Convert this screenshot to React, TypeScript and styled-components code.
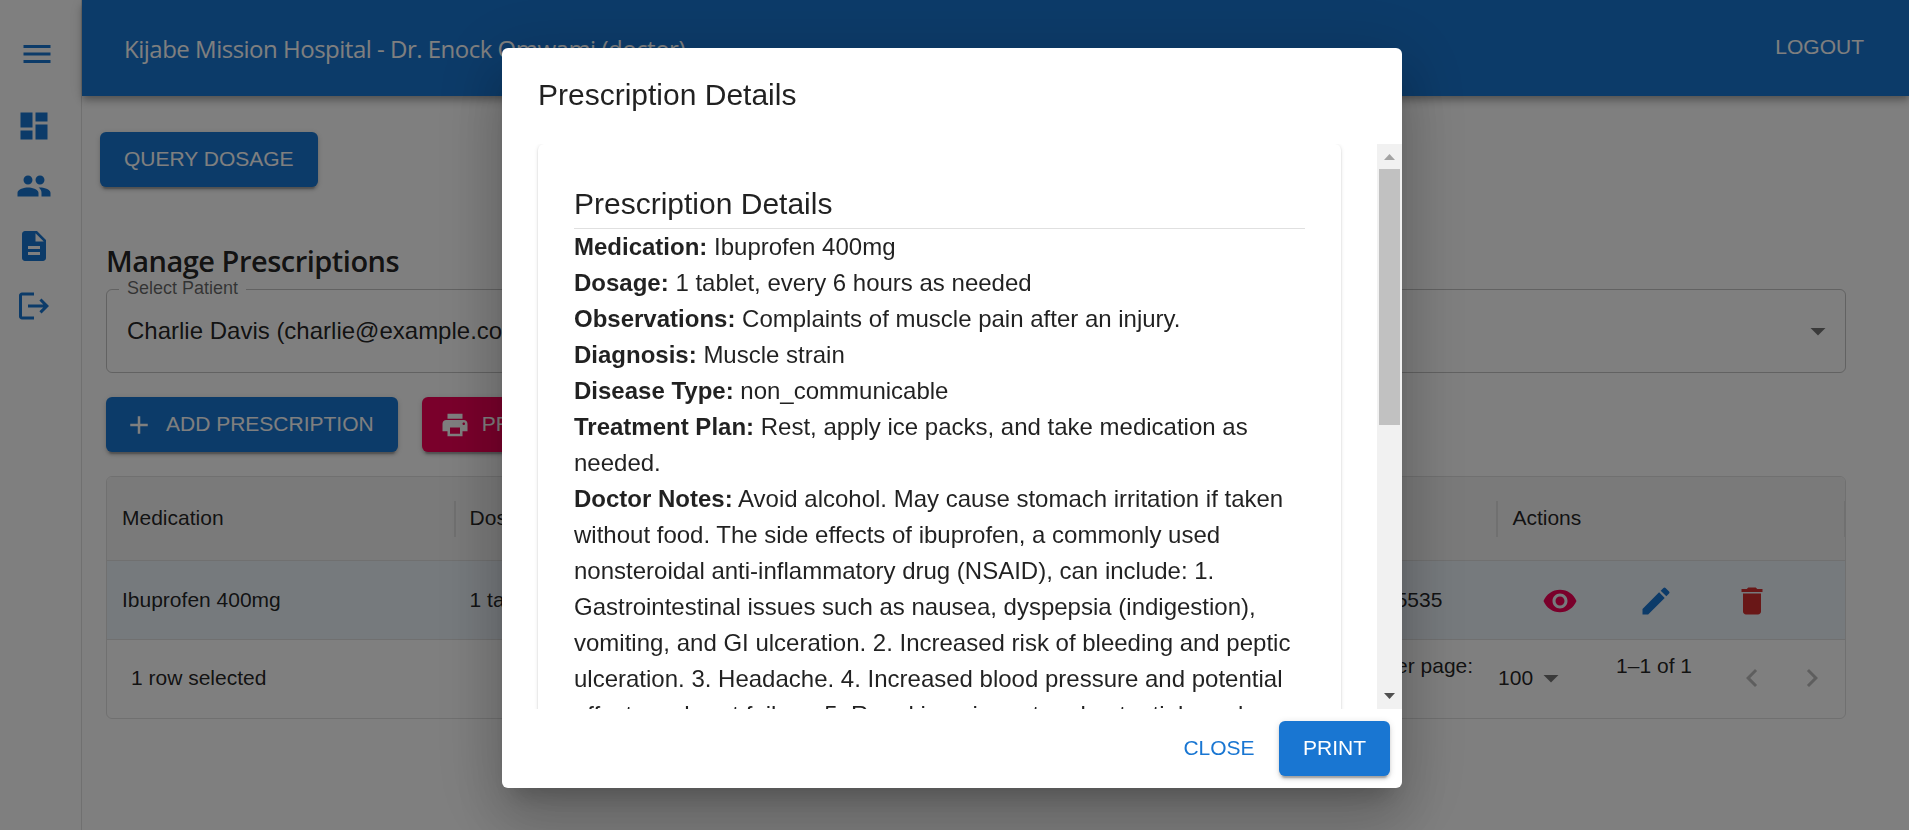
import React from 'react';
import styled, { createGlobalStyle } from 'styled-components';
import {
  MdAdd, MdArrowDropDown, MdDashboard, MdDelete, MdDescription, MdEdit,
  MdKeyboardArrowLeft, MdKeyboardArrowRight, MdLogout, MdMenu, MdPeople, MdPrint, MdVisibility,
} from 'react-icons/md';

const primary = '#1976d2';
const secondary = '#f50057';
const error = '#d32f2f';
const ink = 'rgba(0, 0, 0, 0.87)';
const sans = "'Liberation Sans', Arial, sans-serif";
const humanist = "'Open Sans', 'Noto Sans', sans-serif";

const GlobalStyle = createGlobalStyle`
  *, *::before, *::after { box-sizing: border-box; }
  body { margin: 0; background: #fff; color: ${ink}; font-family: ${sans}; overflow: hidden; }
  svg { display: block; flex-shrink: 0; }
`;

const Page = styled.div`
  display: flex;
  width: 100%;
  height: 830px;
`;

const Drawer = styled.nav`
  width: 82px;
  flex-shrink: 0;
  border-right: 1px solid #e0e0e0;
  color: ${primary};
`;

const MenuButton = styled.div`
  height: 96px;
  padding: 36px 0 0 19px;
`;

const NavItem = styled.div`
  height: 60px;
  padding: 12px 0 0 16px;
`;

const Main = styled.div`
  flex: 1;
  min-width: 0;
  display: flex;
  flex-direction: column;
`;

const AppBar = styled.header`
  height: 96px;
  flex-shrink: 0;
  display: flex;
  align-items: flex-start;
  justify-content: space-between;
  padding: 0 45px 0 42px;
  background: ${primary};
  color: #fff;
  box-shadow: 0 3px 6px -1.5px rgba(0, 0, 0, 0.2), 0 6px 7.5px 0 rgba(0, 0, 0, 0.14), 0 1.5px 15px 0 rgba(0, 0, 0, 0.12);
`;

const AppTitle = styled.h1`
  margin: 31px 0 0;
  font: 400 24px/36px ${humanist};
  letter-spacing: -0.5px;
  white-space: nowrap;
`;

const Logout = styled.span`
  margin-top: 28px;
  font-size: 21px;
  line-height: 37px;
`;

const Content = styled.main`
  padding: 36px 63px 0 24px;
`;

const Button = styled.button<{ $tone?: string; $text?: boolean }>`
  display: inline-flex;
  align-items: center;
  justify-content: center;
  height: 55px;
  min-width: 96px;
  padding: 0 ${(p) => (p.$text ? 12 : 24)}px;
  border: 0;
  border-radius: 6px;
  font: 400 21px/37px ${sans};
  white-space: nowrap;
  color: ${(p) => (p.$text ? primary : '#fff')};
  background: ${(p) => (p.$text ? 'transparent' : p.$tone ?? primary)};
  box-shadow: ${(p) =>
    p.$text
      ? 'none'
      : '0 4.5px 1.5px -3px rgba(0,0,0,.2), 0 3px 3px 0 rgba(0,0,0,.14), 0 1.5px 7.5px 0 rgba(0,0,0,.12)'};
  svg { margin: 0 12px 0 -6px; }
`;

const ButtonLabel = styled.span`
  padding-bottom: 2px;
`;

const QueryRow = styled.div`
  margin-left: -6px;
  height: 108px;
`;

const Heading = styled.h2`
  margin: 0;
  height: 49px;
  font: 600 29px/41px ${humanist};
  letter-spacing: -0.5px;
`;

const Select = styled.fieldset`
  margin: -7px 0 0;
  height: 91px;
  padding: 0 9px 6px 12px;
  border: 1px solid rgba(0, 0, 0, 0.23);
  border-radius: 6px;
  display: block;
  min-width: 0;
`;

const SelectLabel = styled.legend`
  padding: 0 8px 0 8px;
  height: 14px;
  font-size: 18px;
  line-height: 12px;
  color: rgba(0, 0, 0, 0.6);
`;

const SelectValue = styled.div`
  display: flex;
  align-items: center;
  justify-content: space-between;
  height: 70px;
  padding-left: 8px;
  font-size: 24px;
  svg { color: rgba(0, 0, 0, 0.54); }
`;

const ButtonRow = styled.div`
  display: flex;
  gap: 24px;
  margin-top: 24px;
`;

const Grid = styled.section`
  margin-top: 24px;
  border: 1px solid #e0e0e0;
  border-radius: 6px;
  overflow: hidden;
  font-size: 21px;
`;

const GridRow = styled.div<{ $header?: boolean }>`
  display: grid;
  grid-template-columns: repeat(5, 1fr);
  height: ${(p) => (p.$header ? 84 : 79)}px;
  border-bottom: 1px solid #e0e0e0;
  background: ${(p) => (p.$header ? '#f5f5f5' : 'rgba(25, 118, 210, 0.08)')};
`;

const HeaderCell = styled.div`
  display: flex;
  align-items: center;
  justify-content: space-between;
  padding-left: 15px;
  line-height: 26px;
  &::after {
    content: '';
    width: 2px;
    height: 36px;
    margin-right: -1px;
    background: #e0e0e0;
  }
`;

const HeaderLabel = styled.span`
  padding-bottom: 2px;
`;

const Cell = styled.div<{ $end?: boolean }>`
  display: flex;
  align-items: center;
  justify-content: ${(p) => (p.$end ? 'flex-end' : 'flex-start')};
  padding: 0 ${(p) => (p.$end ? 55 : 15)}px 0 15px;
`;

const IconButton = styled.span<{ $color: string }>`
  display: flex;
  justify-content: center;
  width: 96px;
  padding-top: 2px;
  color: ${(p) => p.$color};
`;

const GridFooter = styled.footer`
  display: flex;
  align-items: center;
  height: 78px;
  padding: 0 3px 2px 24px;
`;

const Raised = styled.span`
  padding-bottom: 24px;
`;

const PageSize = styled.span`
  display: flex;
  align-items: center;
  width: 143px;
  padding-left: 25px;
  svg { margin-left: 0; color: rgba(0, 0, 0, 0.54); }
`;

const Spacer = styled.span`
  flex: 1;
`;

const Pager = styled.span`
  display: flex;
  gap: 24px;
  padding: 0 12px 0 42px;
  color: rgba(0, 0, 0, 0.26);
`;

const Backdrop = styled.div`
  position: fixed;
  inset: 0;
  display: flex;
  align-items: flex-start;
  justify-content: center;
  padding: 48px 5px 0 0;
  background: rgba(0, 0, 0, 0.5);
`;

const Dialog = styled.div`
  width: 900px;
  height: 740px;
  display: flex;
  flex-direction: column;
  border-radius: 6px;
  background: #fff;
  box-shadow: 0 16.5px 22.5px -10.5px rgba(0,0,0,.2), 0 36px 57px 4.5px rgba(0,0,0,.14), 0 13.5px 69px 12px rgba(0,0,0,.12);
`;

const DialogTitle = styled.h2`
  margin: 0;
  padding: 23px 36px 25px;
  font: 400 30px/48px ${sans};
`;

const DialogBody = styled.div`
  display: flex;
  height: 565px;
  overflow: hidden;
`;

const Scroller = styled.div`
  flex: 1;
  height: 565px;
  padding: 0 36px;
  overflow: hidden;
`;

const Paper = styled.article`
  height: 1107px;
  padding: 36px;
  border-radius: 6px;
  box-shadow: 0 3px 1.5px -1.5px rgba(0,0,0,.2), 0 1.5px 1.5px 0 rgba(0,0,0,.14), 0 1.5px 4.5px 0 rgba(0,0,0,.12);
`;

const PaperTitle = styled.h3`
  margin: 0;
  font: 400 30px/47px ${sans};
  height: 49px;
  border-bottom: 1px solid #e0e0e0;
`;

const Line = styled.p`
  margin: 0;
  font-size: 24px;
  line-height: 36px;
`;

const Scrollbar = styled.div`
  width: 25px;
  display: flex;
  flex-direction: column;
  align-items: center;
  justify-content: space-between;
  background: #f1f1f1;
`;

const ScrollArrow = styled.svg`
  width: 25px;
  height: 25px;
`;

const Thumb = styled.div`
  width: 21px;
  height: 256px;
  margin-bottom: auto;
  background: #c1c1c1;
`;

const DialogActions = styled.div`
  display: flex;
  justify-content: flex-end;
  gap: 12px;
  padding: 12px;
`;

const details: [string, string][] = [
  ['Medication', 'Ibuprofen 400mg'],
  ['Dosage', '1 tablet, every 6 hours as needed'],
  ['Observations', 'Complaints of muscle pain after an injury.'],
  ['Diagnosis', 'Muscle strain'],
  ['Disease Type', 'non_communicable'],
  ['Treatment Plan', 'Rest, apply ice packs, and take medication as needed.'],
  [
    'Doctor Notes',
    'Avoid alcohol. May cause stomach irritation if taken without food. The side effects of ibuprofen, a commonly used nonsteroidal anti-inflammatory drug (NSAID), can include: 1. Gastrointestinal issues such as nausea, dyspepsia (indigestion), vomiting, and GI ulceration. 2. Increased risk of bleeding and peptic ulceration. 3. Headache. 4. Increased blood pressure and potential effects on heart failure. 5. Renal impairment and potential renal',
  ],
];

const navIcons = [MdDashboard, MdPeople, MdDescription, MdLogout];

export default function App() {
  return (
    <>
      <GlobalStyle />
      <Page>
        <Drawer>
          <MenuButton><MdMenu size={36} /></MenuButton>
          {navIcons.map((Icon, i) => (
            <NavItem key={i}><Icon size={36} /></NavItem>
          ))}
        </Drawer>
        <Main>
          <AppBar>
            <AppTitle>Kijabe Mission Hospital - Dr. Enock Omwami (doctor)</AppTitle>
            <Logout>LOGOUT</Logout>
          </AppBar>
          <Content>
            <QueryRow><Button><ButtonLabel>QUERY DOSAGE</ButtonLabel></Button></QueryRow>
            <Heading>Manage Prescriptions</Heading>
            <Select>
              <SelectLabel>Select Patient</SelectLabel>
              <SelectValue>
                Charlie Davis (charlie@example.com)
                <MdArrowDropDown size={36} />
              </SelectValue>
            </Select>
            <ButtonRow>
              <Button><MdAdd size={30} /><ButtonLabel>ADD PRESCRIPTION</ButtonLabel></Button>
              <Button $tone={secondary}><MdPrint size={30} /><ButtonLabel>PRINT</ButtonLabel></Button>
            </ButtonRow>
            <Grid>
              <GridRow $header>
                <HeaderCell><HeaderLabel>Medication</HeaderLabel></HeaderCell>
                <HeaderCell><HeaderLabel>Dosage</HeaderLabel></HeaderCell>
                <HeaderCell><HeaderLabel /></HeaderCell>
                <HeaderCell><HeaderLabel /></HeaderCell>
                <HeaderCell><HeaderLabel>Actions</HeaderLabel></HeaderCell>
              </GridRow>
              <GridRow>
                <Cell>Ibuprofen 400mg</Cell>
                <Cell>1 tablet</Cell>
                <Cell />
                <Cell $end>5535</Cell>
                <Cell>
                  <IconButton $color={secondary}><MdVisibility size={36} /></IconButton>
                  <IconButton $color={primary}><MdEdit size={36} /></IconButton>
                  <IconButton $color={error}><MdDelete size={36} /></IconButton>
                </Cell>
              </GridRow>
              <GridFooter>
                <span>1 row selected</span>
                <Spacer />
                <Raised>Rows per page:</Raised>
                <PageSize>100<MdArrowDropDown size={36} /></PageSize>
                <Raised>1–1 of 1</Raised>
                <Pager>
                  <MdKeyboardArrowLeft size={36} />
                  <MdKeyboardArrowRight size={36} />
                </Pager>
              </GridFooter>
            </Grid>
          </Content>
        </Main>
      </Page>
      <Backdrop>
        <Dialog role="dialog">
          <DialogTitle>Prescription Details</DialogTitle>
          <DialogBody>
            <Scroller>
              <Paper>
                <PaperTitle>Prescription Details</PaperTitle>
                {details.map(([label, value]) => (
                  <Line key={label}><strong>{label}:</strong> {value}</Line>
                ))}
              </Paper>
            </Scroller>
            <Scrollbar>
              <ScrollArrow viewBox="0 0 25 25"><path d="M7 16h11l-5.500-6z" fill="#a3a3a3" /></ScrollArrow>
              <Thumb />
              <ScrollArrow viewBox="0 0 25 25"><path d="M7 9h11l-5.500 6z" fill="#505050" /></ScrollArrow>
            </Scrollbar>
          </DialogBody>
          <DialogActions>
            <Button $text><ButtonLabel>CLOSE</ButtonLabel></Button>
            <Button><ButtonLabel>PRINT</ButtonLabel></Button>
          </DialogActions>
        </Dialog>
      </Backdrop>
    </>
  );
}
